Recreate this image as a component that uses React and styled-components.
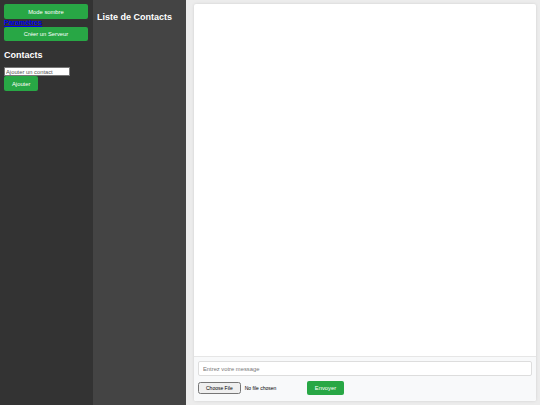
import styled, { createGlobalStyle } from "styled-components";

const GlobalStyle = createGlobalStyle`
  html, body {
    margin: 0;
    padding: 0;
    height: 100%;
  }
  body {
    font-family: "Liberation Sans", Arial, sans-serif;
    background: #ececec;
  }
  #root {
    height: 100%;
  }
`;

const Layout = styled.div`
  display: flex;
  height: 405px;
  width: 540px;
  overflow: hidden;
`;

const Sidebar = styled.div`
  width: 85px;
  padding: 4px;
  background: #333333;
  display: flex;
  flex-direction: column;
  align-items: flex-start;
  flex-shrink: 0;
`;

const GreenButton = styled.button`
  width: ${props => props.full ? "84px" : "auto"};
  height: ${props => props.tall ? "15px" : "14px"};
  padding: 0 ${props => props.full ? "0" : "8px"};
  background: #28a745;
  color: #ffffff;
  border: none;
  border-radius: 2px;
  font-family: "Liberation Sans", Arial, sans-serif;
  font-size: 5.8px;
  cursor: pointer;
`;

const SettingsLink = styled.a`
  color: #0000ee;
  font-size: 7px;
  font-weight: bold;
  line-height: 8px;
  text-decoration: underline;
`;

const SideTitle = styled.h2`
  margin: 9px 0 7px;
  color: #ffffff;
  font-size: 9px;
  font-weight: bold;
`;

const ContactInput = styled.input`
  width: 62px;
  height: 7px;
  padding: 0 1px;
  margin: 0;
  border: 1px solid #767676;
  font-family: "Liberation Sans", Arial, sans-serif;
  font-size: 5.8px;
  &::placeholder {
    color: #555555;
  }
`;

const ContactList = styled.div`
  width: 85px;
  padding: 12px 4px;
  background: #444444;
  flex-shrink: 0;
`;

const ListTitle = styled.h2`
  margin: 0;
  color: #ffffff;
  font-size: 9px;
  font-weight: bold;
`;

const Main = styled.div`
  flex: 1;
  padding: 4px 4px 4px 8px;
  display: flex;
`;

const ChatCard = styled.div`
  flex: 1;
  display: flex;
  flex-direction: column;
  background: #ffffff;
  box-shadow: 0 0 3px rgba(0, 0, 0, 0.12);
  border-radius: 2px;
  overflow: hidden;
`;

const Messages = styled.div`
  flex: 1;
`;

const Composer = styled.div`
  height: 36px;
  padding: 4px;
  background: #f8f9fa;
  border-top: 1px solid #e6e6e6;
  display: flex;
  flex-direction: column;
  gap: 5px;
`;

const MessageInput = styled.input`
  height: 13px;
  margin: 0;
  padding: 0 4px;
  border: 1px solid #dddddd;
  border-radius: 2px;
  font-family: "Liberation Sans", Arial, sans-serif;
  font-size: 5.8px;
  &::placeholder {
    color: #777777;
  }
`;

const Row = styled.div`
  display: flex;
  align-items: center;
  gap: 4px;
`;

const FileInput = styled.input`
  width: 105px;
  font-family: "Liberation Sans", Arial, sans-serif;
  font-size: 5px;
`;

const SendButton = styled(GreenButton)`
  width: 37px;
  height: 14px;
  padding: 0;
`;

const App = () => {
  return (
    <>
      <GlobalStyle />
      <Layout>
        <Sidebar>
          <GreenButton full tall>Mode sombre</GreenButton>
          <SettingsLink href="#">Paramètres</SettingsLink>
          <GreenButton full>Créer un Serveur</GreenButton>
          <SideTitle>Contacts</SideTitle>
          <ContactInput placeholder="Ajouter un contact" />
          <GreenButton tall>Ajouter</GreenButton>
        </Sidebar>
        <ContactList>
          <ListTitle>Liste de Contacts</ListTitle>
        </ContactList>
        <Main>
          <ChatCard>
            <Messages />
            <Composer>
              <MessageInput placeholder="Entrez votre message" />
              <Row>
                <FileInput type="file" />
                <SendButton>Envoyer</SendButton>
              </Row>
            </Composer>
          </ChatCard>
        </Main>
      </Layout>
    </>
  );
};

export default App;
